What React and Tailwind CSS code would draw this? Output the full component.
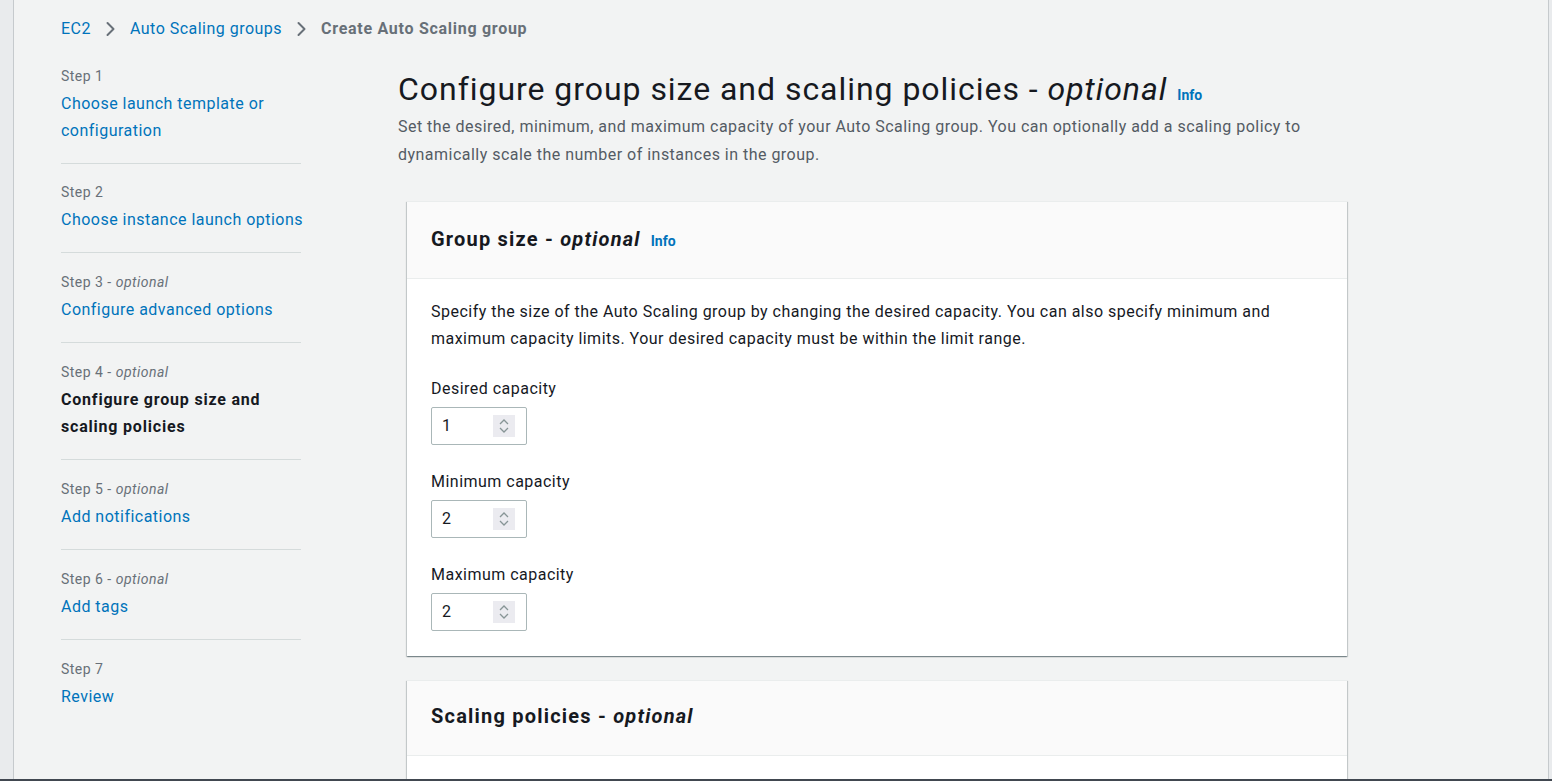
import React from "react";

const FONT = { fontFamily: "Roboto, 'Noto Sans', sans-serif" };

function Chevron() {
  return (
    <svg width="11" height="16" viewBox="0 0 11 16" className="mx-[14px]">
      <polyline points="2.5,2 8.5,8 2.5,14" fill="none" stroke="#687078" strokeWidth="2" strokeLinecap="round" strokeLinejoin="round" />
    </svg>
  );
}

function NavItem({ step, optional, label, active, first, tight }) {
  return (
    <div className={`${first ? "" : tight ? "pt-[18px]" : "pt-[19px]"} pb-[19px] border-b border-[#d5dbdb]`}>
      <div className="text-[14px] leading-[20px] text-[#687078]">
        {step}
        {optional && (
          <>
            {" - "}
            <i>optional</i>
          </>
        )}
      </div>
      <div
        className={`mt-[4px] whitespace-nowrap text-[16px] leading-[27px] ${
          active ? "font-bold tracking-[0.05em] text-[#16191f]" : "text-[#0073bb]"
        }`}
      >
        {label}
      </div>
    </div>
  );
}

function NumberInput({ value }) {
  return (
    <div className="mt-[7px] flex h-[38px] w-[96px] items-center justify-between rounded-[2px] border border-[#aab7b8] bg-white pl-[10px] pr-[11px]">
      <span className="text-[16px] text-[#16191f]">{value}</span>
      <div className="flex h-[22px] w-[22px] flex-col items-center justify-center gap-[2px] bg-[#ebebf0]">
        <svg width="10" height="6" viewBox="0 0 10 6">
          <polyline points="1,5 5,1 9,5" fill="none" stroke="#879596" strokeWidth="1.3" />
        </svg>
        <svg width="10" height="6" viewBox="0 0 10 6">
          <polyline points="1,1 5,5 9,1" fill="none" stroke="#879596" strokeWidth="1.3" />
        </svg>
      </div>
    </div>
  );
}

function Field({ label, value, first }) {
  return (
    <div className={first ? "" : "mt-[26px]"}>
      <div className="text-[16px] leading-[22px] text-[#16191f]">{label}</div>
      <NumberInput value={value} />
    </div>
  );
}

const cardShadow =
  "shadow-[0_1px_1px_0_rgba(0,28,36,0.3),1px_1px_1px_0_rgba(0,28,36,0.15),-1px_1px_1px_0_rgba(0,28,36,0.15)]";

export default function App() {
  return (
    <div className="flex h-[781px] w-full flex-col overflow-hidden tracking-[0.03em]" style={FONT}>
      <div className="flex min-h-0 flex-1">
        <div className="w-[14px] shrink-0 border-r border-[#c6cacd] bg-[#e9ebed]" />
        <div className="min-w-0 flex-1 overflow-hidden border-r border-[#c6cacd] bg-[#f2f3f3] pl-[47px]">
          {/* breadcrumb */}
          <div className="flex items-center pt-[19px] text-[16px] leading-[20px]">
            <span className="text-[#0073bb]">EC2</span>
            <Chevron />
            <span className="text-[#0073bb]">Auto Scaling groups</span>
            <Chevron />
            <span className="font-bold tracking-[0.045em] text-[#687078]">Create Auto Scaling group</span>
          </div>

          <div className="mt-[27px] flex">
            {/* nav */}
            <div className="w-[240px] shrink-0">
              <NavItem first step="Step 1" label={<>Choose launch template or<br />configuration</>} />
              <NavItem tight step="Step 2" label="Choose instance launch options" />
              <NavItem step="Step 3" optional label="Configure advanced options" />
              <NavItem step="Step 4" optional active label={<>Configure group size and<br />scaling policies</>} />
              <NavItem step="Step 5" optional label="Add notifications" />
              <NavItem step="Step 6" optional label="Add tags" />
              <div className="pt-[19px]">
                <div className="text-[14px] leading-[20px] text-[#687078]">Step 7</div>
                <div className="mt-[4px] text-[16px] leading-[27px] text-[#0073bb]">Review</div>
              </div>
            </div>

            {/* main */}
            <div className="ml-[97px] w-[980px] shrink-0">
              <div className="mt-[3px] flex items-baseline">
                <h1 className="whitespace-nowrap text-[32px] leading-[40px] font-normal tracking-[0.03em] text-[#16191f]">
                  Configure group size and scaling policies - <i>optional</i>
                </h1>
                <span className="ml-[10px] text-[14px] font-bold tracking-normal text-[#0073bb]">Info</span>
              </div>
              <p className="mt-[4px] whitespace-nowrap text-[16px] leading-[28px] text-[#545b64]">
                Set the desired, minimum, and maximum capacity of your Auto Scaling group. You can optionally add a scaling policy to
                <br />
                dynamically scale the number of instances in the group.
              </p>

              <div className={`ml-[9px] mt-[32px] w-[940px] border-t border-[#eaeded] bg-white ${cardShadow}`}>
                <div className="flex items-baseline border-b border-[#eaeded] bg-[#fafafa] px-[24px] pt-[23px] pb-[25px]">
                  <h2 className="text-[20px] leading-[28px] font-bold tracking-[0.06em] text-[#16191f]">
                    Group size - <i>optional</i>
                  </h2>
                  <span className="ml-[10px] text-[14px] font-bold tracking-normal text-[#0073bb]">Info</span>
                </div>
                <div className="px-[24px] pt-[19px] pb-[25px]">
                  <p className="mb-[26px] whitespace-nowrap text-[16px] leading-[27px] text-[#16191f]">
                    Specify the size of the Auto Scaling group by changing the desired capacity. You can also specify minimum and
                    <br />
                    maximum capacity limits. Your desired capacity must be within the limit range.
                  </p>
                  <Field first label="Desired capacity" value="1" />
                  <Field label="Minimum capacity" value="2" />
                  <Field label="Maximum capacity" value="2" />
                </div>
              </div>

              <div className={`ml-[9px] mt-[24px] w-[940px] border-t border-[#eaeded] bg-white ${cardShadow}`}>
                <div className="border-b border-[#eaeded] bg-[#fafafa] px-[24px] pt-[21px] pb-[25px]">
                  <h2 className="text-[20px] leading-[28px] font-bold tracking-[0.06em] text-[#16191f]">
                    Scaling policies - <i>optional</i>
                  </h2>
                </div>
                <div className="h-[80px]" />
              </div>
            </div>
          </div>
        </div>
        <div className="w-[3px] shrink-0 bg-[#e9ebed]" />
      </div>
      <div className="h-[2px] shrink-0 bg-[#414750]" />
    </div>
  );
}
